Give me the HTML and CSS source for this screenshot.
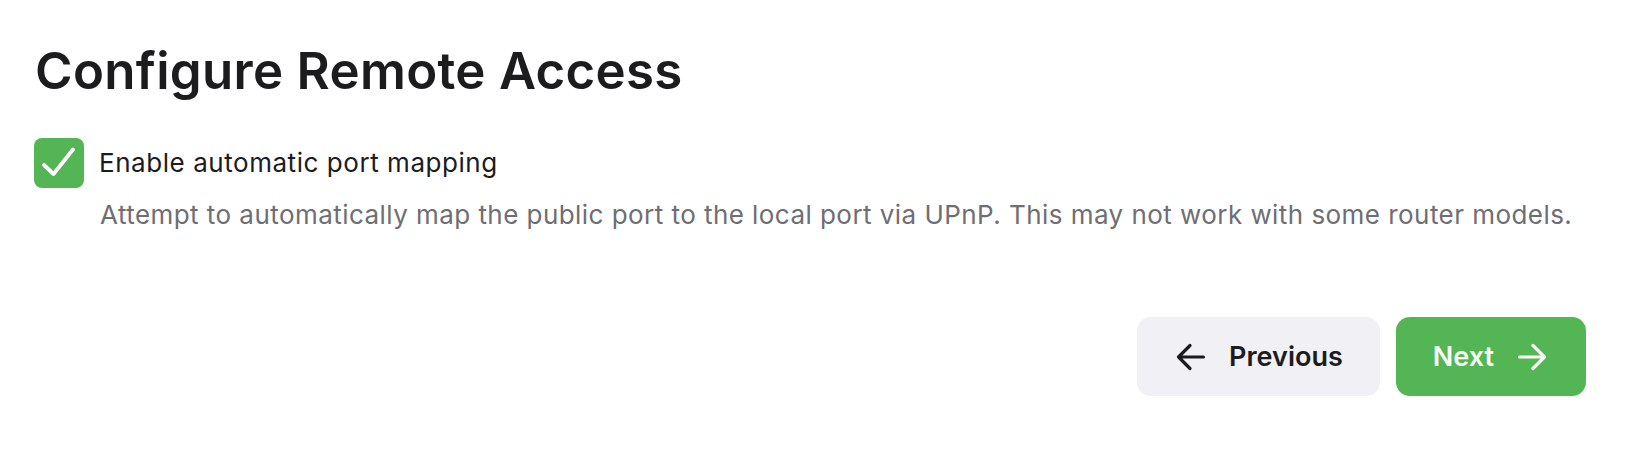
FILE: index.html
```html
<!DOCTYPE html>
<html lang="en">
<head>
<meta charset="utf-8">
<title>Configure Remote Access</title>
<link rel="stylesheet" href="styles.css">
</head>
<body>
<main class="page">
  <h1 class="title">Configure Remote Access</h1>
  <label class="option">
    <span class="checkbox" aria-checked="true" role="checkbox">
      <svg viewBox="0 0 50 50" width="50" height="50" aria-hidden="true">
        <path d="M10 27 L19.5 36 L39 11.5" fill="none" stroke="#ffffff" stroke-width="3.8" stroke-linecap="round" stroke-linejoin="round"/>
      </svg>
    </span>
    <span class="option-label">Enable automatic port mapping</span>
  </label>
  <p class="option-desc">Attempt to automatically map the public port to the local port via UPnP. This may not work with some router models.</p>
  <div class="actions">
    <button class="btn btn-secondary" type="button">
      <svg class="btn-icon" viewBox="0 0 32 32" width="32" height="32" aria-hidden="true">
        <path d="M15 4.5 L3.5 16 L15 27.5 M3.5 16 H28.5" fill="none" stroke="currentColor" stroke-width="3.2" stroke-linecap="round" stroke-linejoin="round"/>
      </svg>
      <span>Previous</span>
    </button>
    <button class="btn btn-primary" type="button">
      <span>Next</span>
      <svg class="btn-icon" viewBox="0 0 32 32" width="32" height="32" aria-hidden="true">
        <path d="M17 4.5 L28.5 16 L17 27.5 M28.5 16 H3.5" fill="none" stroke="currentColor" stroke-width="3.2" stroke-linecap="round" stroke-linejoin="round"/>
      </svg>
    </button>
  </div>
</main>
</body>
</html>
```

FILE: styles.css
```css
* { box-sizing: border-box; }
html, body { margin: 0; padding: 0; background: #ffffff; }
body {
  font-family: Inter, "Noto Sans", "Liberation Sans", sans-serif;
  color: #1c1c1e;
}
.page {
  padding: 41px 50px 0 34px;
}
.title {
  margin: 0;
  font-size: 51px;
  line-height: 60px;
  font-weight: 600;
  letter-spacing: 0.3px;
  padding-left: 1px;
}
.option {
  display: flex;
  align-items: center;
  gap: 15px;
  margin-top: 37px;
}
.checkbox {
  width: 50px;
  height: 50px;
  border-radius: 8px;
  background: #53b553;
  display: flex;
  align-items: center;
  justify-content: center;
  flex: none;
}
.checkbox svg { display: block; }
.option-label {
  font-size: 26px;
  line-height: 32px;
  letter-spacing: 0.55px;
  color: #1c1c1e;
}
.option-desc {
  margin: 11px 0 0 66px;
  font-size: 26px;
  line-height: 32px;
  letter-spacing: 0.45px;
  color: #6e6e73;
}
.actions {
  display: flex;
  justify-content: flex-end;
  gap: 16px;
  margin-top: 86px;
}
.btn {
  display: flex;
  align-items: center;
  gap: 22px;
  height: 79px;
  border: none;
  border-radius: 14px;
  font-family: inherit;
  font-size: 27px;
  font-weight: 600;
  cursor: pointer;
}
.btn-icon { display: block; flex: none; }
.btn-secondary {
  background: #f0f0f5;
  color: #1c1c1e;
  padding: 0 37px 0 38px;
}
.btn-primary {
  background: #53b553;
  color: #f6fff4;
  padding: 0 38px 0 37px;
}
```
